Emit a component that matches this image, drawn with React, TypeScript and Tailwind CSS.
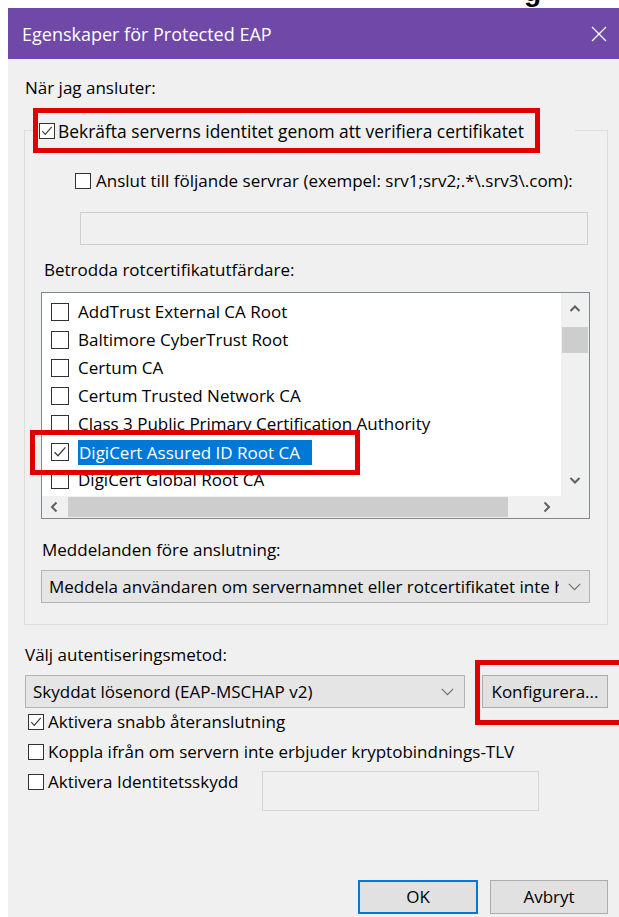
const ui = "font-['Open_Sans',sans-serif]"

type BoxProps = { checked?: boolean; big?: boolean }

// Classic Windows checkbox: thin dark frame, white fill, light check stroke
function CheckBox({ checked = false, big = false }: BoxProps) {
  return (
    <span
      className={`${big ? 'w-[18px] h-[18px]' : 'w-[16px] h-[16px]'} shrink-0 border border-[#333333] bg-white flex items-center justify-center`}
    >
      {checked && (
        <svg viewBox="0 0 16 16" className="w-full h-full">
          <path d="M2.6 8.2 L6 11.8 L13.4 3.4" fill="none" stroke="#3a3a3a" strokeWidth="1.3" />
        </svg>
      )}
    </span>
  )
}

function ComboChevron() {
  return (
    <svg width="13" height="8" viewBox="0 0 13 8">
      <path d="M0.8 0.8 L6.5 6.6 L12.2 0.8" fill="none" stroke="#6d6d6d" strokeWidth="1.1" />
    </svg>
  )
}

function ScrollArrow({ dir }: { dir: 'up' | 'down' | 'left' | 'right' }) {
  const d = {
    up: 'M1.5 7 L6 2.5 L10.5 7',
    down: 'M1.5 3 L6 7.5 L10.5 3',
    left: 'M7.5 1.5 L3 6 L7.5 10.5',
    right: 'M4.5 1.5 L9 6 L4.5 10.5',
  }[dir]
  return (
    <svg width="12" height="12" viewBox="0 0 12 12">
      <path d={d} fill="none" stroke="#606060" strokeWidth="2" />
    </svg>
  )
}

const roots = [
  { name: 'AddTrust External CA Root' },
  { name: 'Baltimore CyberTrust Root' },
  { name: 'Certum CA' },
  { name: 'Certum Trusted Network CA' },
  { name: 'Class 3 Public Primary Certification Authority' },
  { name: 'DigiCert Assured ID Root CA', checked: true, selected: true },
  { name: 'DigiCert Global Root CA' },
]

function RootList() {
  return (
    <div className="relative mt-[10px] h-[227px] border border-[#828790] bg-white flex flex-col">
      <div className="flex flex-1 min-h-0">
        <div className="flex-1 min-w-0 overflow-hidden pt-[5px]">
          {roots.map((r) => (
            <div key={r.name} className="h-[28px] flex items-center pl-[9px] gap-[9px] whitespace-nowrap">
              <CheckBox checked={r.checked} big />
              <span className={r.selected ? 'bg-[#0078d7] text-white pl-[1px] pr-[12px] leading-[25px]' : ''}>
                {r.name}
              </span>
            </div>
          ))}
        </div>
        <div className="w-[28px] shrink-0 bg-[#f0f0f0] flex flex-col">
          <div className="h-[33px] flex items-center justify-center">
            <ScrollArrow dir="up" />
          </div>
          <div className="h-[26px] mt-[1px] mx-[1px] bg-[#cdcdcd]" />
          <div className="flex-1" />
          <div className="h-[31px] flex items-center justify-center">
            <ScrollArrow dir="down" />
          </div>
        </div>
      </div>
      <div className="h-[22px] flex bg-[#f0f0f0]">
        <div className="w-[26px] flex items-center justify-center">
          <ScrollArrow dir="left" />
        </div>
        <div className="w-[440px] bg-[#cdcdcd] my-[1px]" />
        <div className="flex-1" />
        <div className="w-[30px] flex items-center justify-center">
          <ScrollArrow dir="right" />
        </div>
        <div className="w-[28px]" />
      </div>

      {/* annotation around the chosen root certificate */}
      <div className="absolute left-[-12px] top-[137px] w-[330px] h-[45px] border-[5px] border-[#e00000]" />
    </div>
  )
}

export default function App() {
  return (
    <div className={`w-[619px] h-[917px] bg-white overflow-hidden flex flex-col text-black ${ui}`}>
      {/* tail of the heading above the dialog */}
      <div className="h-[8px] shrink-0 overflow-hidden pl-[524px]">
        <span className="block -mt-[22px] text-[28px] leading-none font-bold font-['Liberation_Sans',sans-serif]">g</span>
      </div>

      <div className="flex-1 min-h-0 ml-[8px] flex flex-col bg-[#f0f0f0]">
        <header className="h-[51px] shrink-0 bg-[#7049a8] flex items-center justify-between pl-[14px] pr-[12px]">
          <span className="text-white text-[18px] leading-[24px]">Egenskaper för Protected EAP</span>
          <svg width="16" height="16" viewBox="0 0 16 16">
            <path d="M1 1 L15 15 M15 1 L1 15" stroke="white" strokeWidth="1.3" />
          </svg>
        </header>

        <div className="flex-1 min-h-0 flex flex-col pl-[17px] pr-[11px] text-[17px] leading-[24px]">
          <div className="mt-[17px]">När jag ansluter:</div>

          <fieldset className="mt-[8px] -ml-[1px] min-w-0 border border-[#dcdcdc]">
            <legend className="ml-[8px] pr-[35px]">
              <div className="w-[507px] h-[45px] border-[5px] border-[#e00000] flex items-center pl-[1px] gap-[3px] whitespace-nowrap">
                <CheckBox checked />
                <span className="text-[17.4px]">Bekräfta serverns identitet genom att verifiera certifikatet</span>
              </div>
            </legend>

            <div className="pl-[16px] pr-[17px] pb-[21px]">
              <div className="mt-[16px] h-[24px] flex items-center pl-[34px] gap-[5px] whitespace-nowrap">
                <CheckBox />
                <span>Anslut till följande servrar (exempel: srv1;srv2;.*\.srv3\.com):</span>
              </div>
              <div className="mt-[19px] ml-[39px] mr-[2px] h-[33px] border border-[#cfcfcf] bg-[#f0f0f0]" />

              <div className="mt-[13px] pl-[3px]">Betrodda rotcertifikatutfärdare:</div>
              <RootList />

              <div className="mt-[19px] pl-[1px]">Meddelanden före anslutning:</div>
              <div className="mt-[8px] h-[33px] border border-[#b4b4b4] bg-[#e5e5e5] flex items-center">
                <span className="flex-1 min-w-0 overflow-hidden whitespace-nowrap pl-[7px]">
                  Meddela användaren om servernamnet eller rotcertifikatet inte har angetts
                </span>
                <span className="w-[30px] shrink-0 flex items-center justify-center">
                  <ComboChevron />
                </span>
              </div>
            </div>
          </fieldset>

          <div className="mt-[18px]">Välj autentiseringsmetod:</div>
          <div className="relative mt-[8px] h-[33px] flex gap-[17px]">
            <div className="w-[440px] border border-[#b4b4b4] bg-[#e5e5e5] flex items-center">
              <span className="flex-1 pl-[7px] whitespace-nowrap">Skyddat lösenord (EAP-MSCHAP v2)</span>
              <span className="w-[34px] flex items-center justify-center">
                <ComboChevron />
              </span>
            </div>
            <button className="w-[126px] border border-[#adadad] bg-[#e1e1e1] text-[17px] leading-[24px]">
              Konfigurera...
            </button>
            {/* annotation around the configure button */}
            <div className="absolute left-[450px] top-[-15px] w-[170px] h-[65px] border-[5px] border-[#e00000]" />
          </div>

          <div className="mt-[2px] flex flex-col gap-[6px] pl-[3px]">
            <div className="h-[24px] flex items-center gap-[4px] whitespace-nowrap">
              <CheckBox checked />
              <span>Aktivera snabb återanslutning</span>
            </div>
            <div className="h-[24px] flex items-center gap-[4px] whitespace-nowrap">
              <CheckBox />
              <span>Koppla ifrån om servern inte erbjuder kryptobindnings-TLV</span>
            </div>
            <div className="flex items-start">
              <div className="w-[234px] h-[24px] flex items-center gap-[4px] whitespace-nowrap">
                <CheckBox />
                <span>Aktivera Identitetsskydd</span>
              </div>
              <div className="mt-[1px] w-[277px] h-[40px] border border-[#d5d5d5] bg-[#f0f0f0]" />
            </div>
          </div>

          <div className="mt-auto mb-[3px] flex justify-end gap-[12px]">
            <button className="w-[120px] h-[34px] border-2 border-[#0078d7] bg-[#e1e1e1] text-[17px]">OK</button>
            <button className="w-[118px] h-[34px] border border-[#adadad] bg-[#e1e1e1] text-[17px]">Avbryt</button>
          </div>
        </div>
      </div>
    </div>
  )
}
